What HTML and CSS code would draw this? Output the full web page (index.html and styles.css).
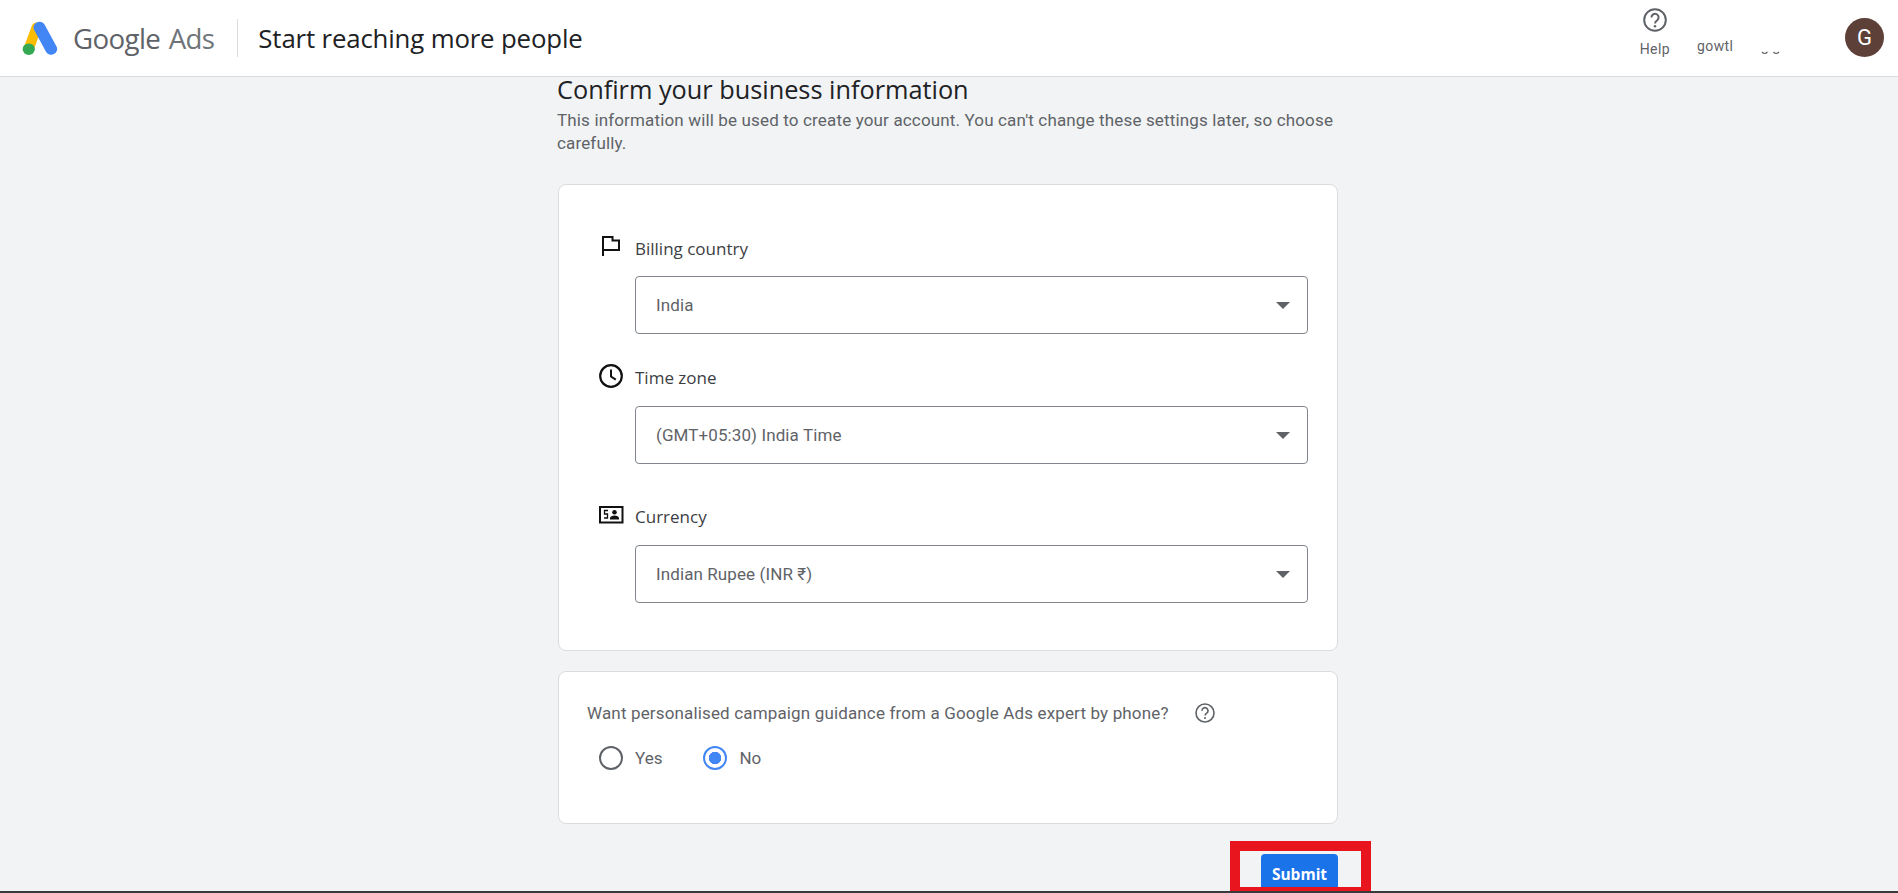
FILE: index.html
```html
<!DOCTYPE html>
<html lang="en">
<head>
<meta charset="utf-8">
<title>Google Ads</title>
<link rel="stylesheet" href="styles.css">
</head>
<body>
<header class="topbar">
  <div class="brand">
    <svg class="logo" width="36" height="34" viewBox="0 0 32 32" preserveAspectRatio="none" aria-hidden="true">
      <path d="M13 6 L6 26" stroke="#fbbc04" stroke-width="9" stroke-linecap="round" fill="none"/>
      <path d="M15.500 6 L26 26.500" stroke="#4285f4" stroke-width="10.500" stroke-linecap="round" fill="none"/>
      <circle cx="6" cy="26.500" r="5.400" fill="#34a853"/>
    </svg>
    <span class="brand-name">Google <span class="brand-ads">Ads</span></span>
    <span class="brand-divider"></span>
    <span class="page-title">Start reaching more people</span>
  </div>
  <div class="top-actions">
    <div class="help">
      <svg width="26" height="26" viewBox="0 0 26 26" aria-hidden="true">
        <circle cx="13" cy="13" r="10.800" fill="none" stroke="#5f6368" stroke-width="2"/>
        <path d="M9.400 10.400a3.600 3.600 0 1 1 5.900 2.800c-1.200 1-2.200 1.600-2.200 3.200" fill="none" stroke="#5f6368" stroke-width="2"/>
        <circle cx="13" cy="19.200" r="1.250" fill="#5f6368"/>
      </svg>
      <span>Help</span>
    </div>
    <span class="account-name">gowtl</span>
    <span class="account-ticks">
      <svg width="20" height="5" viewBox="0 0 20 5" aria-hidden="true"><path d="M1 1q2.500 3 5.500 0M12.500 1q2.500 3 5.500 0" fill="none" stroke="#5f6368" stroke-width="1.200"/></svg>
    </span>
    <span class="avatar">G</span>
  </div>
</header>

<main class="content">
  <h1 class="heading">Confirm your business information</h1>
  <p class="intro">This information will be used to create your account. You can't change these settings later, so choose carefully.</p>

  <section class="card card-form">
    <div class="field field-billing">
      <div class="field-label">
        <span class="field-icon">
          <svg width="24" height="24" viewBox="0 0 24 24" aria-hidden="true"><path d="M5 22V3h9.500v3.500h6.500V16H6" fill="none" stroke="#111" stroke-width="2"/></svg>
        </span>
        <span>Billing country</span>
      </div>
      <div class="select"><span>India</span><i class="caret"></i></div>
    </div>
    <div class="field field-time">
      <div class="field-label">
        <span class="field-icon">
          <svg width="26" height="26" viewBox="0 0 26 26" aria-hidden="true"><circle cx="13" cy="13" r="10.800" fill="none" stroke="#111" stroke-width="2.200"/><path d="M13 6.500v7l4.800 3.200" fill="none" stroke="#111" stroke-width="2"/></svg>
        </span>
        <span>Time zone</span>
      </div>
      <div class="select"><span>(GMT+05:30) India Time</span><i class="caret"></i></div>
    </div>
    <div class="field field-currency">
      <div class="field-label">
        <span class="field-icon">
          <svg width="26" height="18" viewBox="0 0 26 18" aria-hidden="true"><rect x="2" y="1" width="22.500" height="15.500" fill="none" stroke="#111" stroke-width="2"/><path d="M10 4.500H6.500v3.500H9.500v4H6" fill="none" stroke="#111" stroke-width="1.300"/><circle cx="16.500" cy="6.200" r="2.300" fill="#111"/><path d="M12 13.500v-1.500c0-1.500 2.500-2.500 4.500-2.500s4.500 1 4.500 2.500v1.500z" fill="#111"/></svg>
        </span>
        <span>Currency</span>
      </div>
      <div class="select"><span>Indian Rupee (INR ₹)</span><i class="caret"></i></div>
    </div>
  </section>

  <section class="card card-guidance">
    <div class="question">
      <span>Want personalised campaign guidance from a Google Ads expert by phone?</span>
      <svg width="22" height="22" viewBox="0 0 22 22" aria-hidden="true">
        <circle cx="11" cy="11" r="9" fill="none" stroke="#5f6368" stroke-width="1.600"/>
        <path d="M8 8.700a3 3 0 1 1 4.900 2.300c-1 .8-1.800 1.300-1.800 2.600" fill="none" stroke="#5f6368" stroke-width="1.600"/>
        <circle cx="11" cy="16" r="1" fill="#5f6368"/>
      </svg>
    </div>
    <div class="radios">
      <span class="radio"><i class="radio-mark"></i>Yes</span>
      <span class="radio"><i class="radio-mark radio-on"></i>No</span>
    </div>
  </section>

  <div class="actions">
    <div class="highlight-wrap">
      <button class="submit" type="button">Submit</button>
      <span class="highlight"></span>
    </div>
  </div>
</main>
<div class="bottom-edge"></div>
</body>
</html>
```

FILE: styles.css
```css
* { box-sizing: border-box; }
html, body { height: 893px; overflow: hidden; }
body {
  margin: 0;
  background: #f1f3f4;
  font-family: Roboto, "Liberation Sans", sans-serif;
  color: #3c4043;
  display: flex;
  flex-direction: column;
  position: relative;
}

.topbar {
  height: 77px;
  flex: none;
  background: #fff;
  border-bottom: 1px solid #dadce0;
  display: flex;
  justify-content: space-between;
  align-items: center;
  padding: 0 14px 0 22px;
}
.brand { display: flex; align-items: center; }
.logo { flex: none; }
.brand-name {
  font-family: "Open Sans", sans-serif;
  font-size: 27.700px;
  color: #5f6368;
  margin-left: 15px;
  letter-spacing: -.65px;
}
.brand-ads { color: #70757a; margin-left: 2px; }
.brand-divider {
  width: 1px;
  height: 38px;
  background: #dadce0;
  margin: 0 20px 0 23px;
}
.page-title {
  font-family: "Open Sans", sans-serif;
  font-size: 25.800px;
  color: #202124;
  letter-spacing: -.16px;
}

.top-actions { display: flex; align-items: center; }
.help {
  display: flex;
  flex-direction: column;
  align-items: center;
  font-size: 14px;
  letter-spacing: .4px;
  color: #5f6368;
  gap: 8px;
  margin-bottom: 12px;
}
.account-name {
  font-size: 14px;
  letter-spacing: .4px;
  color: #5f6368;
  margin: 16px 0 0 27px;
  width: 64px;
}
.account-ticks { display: flex; margin-top: 30px; width: 84px; }
.avatar {
  width: 39px;
  height: 39px;
  border-radius: 50%;
  background: #5d4037;
  color: #fff;
  font-size: 22px;
  margin-bottom: 2px;
  display: flex;
  align-items: center;
  justify-content: center;
}

.content {
  width: 782px;
  padding-right: 2px;
  margin: 0 auto;
  flex: none;
}
.heading {
  font-family: "Open Sans", sans-serif;
  font-weight: 400;
  font-size: 25.300px;
  line-height: 25px;
  color: #202124;
  margin: 0 0 0 -1px;
}
.intro {
  margin: 7px 0 0 -1px;
  width: 790px;
  font-size: 17px;
  line-height: 23px;
  letter-spacing: .15px;
  color: #5f6368;
}
.card {
  background: #fff;
  border: 1px solid #dadce0;
  border-radius: 8px;
}
.card-form {
  height: 467px;
  margin-top: 29px;
  padding: 50px 29px 0 34px;
}
.field-label {
  display: flex;
  align-items: center;
  font-family: "Open Sans", sans-serif;
  font-size: 17px;
  color: #3c4043;
  height: 26px;
}
.field-icon {
  width: 42px;
  flex: none;
  display: flex;
  align-items: center;
  padding-left: 5px;
}
.field-billing .field-icon { margin-top: -4px; }
.field-time .field-icon { margin-top: -2px; }
.field-currency .field-icon { margin-top: -3px; }
.select {
  margin: 15px 0 0 42px;
  height: 58px;
  border: 1px solid #80868b;
  border-radius: 4px;
  display: flex;
  align-items: center;
  justify-content: space-between;
  padding: 0 17px 0 20px;
  font-size: 17px;
  letter-spacing: .1px;
  color: #5f6368;
}
.field-time .select,
.field-currency .select { margin-top: 16px; }
.caret {
  width: 0;
  height: 0;
  border-left: 7px solid transparent;
  border-right: 7px solid transparent;
  border-top: 7px solid #5f6368;
}
.field-time { margin-top: 30px; }
.field-currency { margin-top: 39px; }

.card-guidance {
  height: 153px;
  margin-top: 20px;
  padding: 30px 0 0 28px;
}
.question {
  display: flex;
  align-items: center;
  gap: 25px;
  font-size: 17px;
  letter-spacing: .15px;
  color: #5f6368;
  height: 22px;
}
.radios {
  display: flex;
  gap: 41px;
  margin: 22px 0 0 12px;
}
.radio {
  display: flex;
  align-items: center;
  gap: 12px;
  font-size: 17px;
  color: #5f6368;
  height: 24px;
}
.radio-mark {
  width: 24px;
  height: 24px;
  border: 2px solid #5f6368;
  border-radius: 50%;
  flex: none;
}
.radio-on {
  border-color: #4285f4;
  background: radial-gradient(circle, #4285f4 0 6px, #fff 6.500px);
}

.actions {
  display: flex;
  justify-content: flex-end;
  margin-top: 30px;
}
.highlight-wrap { position: relative; }
.submit {
  display: block;
  width: 77px;
  height: 40px;
  border: 0;
  border-radius: 4px;
  background: #1a73e8;
  color: #fff;
  font-family: "Open Sans", sans-serif;
  font-weight: 700;
  font-size: 15.500px;
  padding: 0;
}
.highlight {
  position: absolute;
  left: -31px;
  top: -13px;
  width: 141px;
  height: 53px;
  border: 10px solid #e8141e;
  border-bottom-width: 7px;
}
.bottom-edge {
  position: absolute;
  left: 0;
  right: 0;
  bottom: 0;
  height: 2px;
  background: #3a3a3a;
}
```
